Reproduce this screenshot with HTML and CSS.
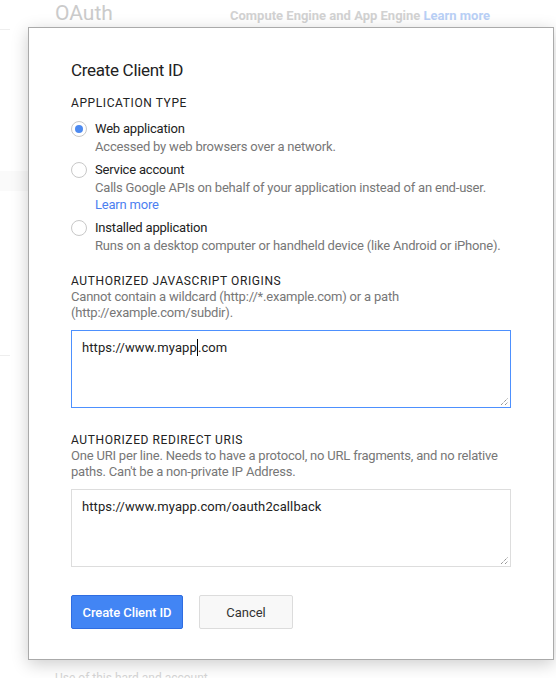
FILE: index.html
```html
<!DOCTYPE html>
<html>
<head>
<meta charset="utf-8">
<link rel="stylesheet" href="styles.css">
</head>
<body>
<div class="page">
  <div class="page-head">
    <span class="page-title">OAuth</span>
    <span class="page-note">Compute Engine and App Engine <span class="page-link">Learn more</span></span>
  </div>
  <div class="page-rule"></div>
  <div class="page-band"></div>
  <div class="page-rule low"></div>
  <div class="page-foot">Use of this hard and account</div>
</div>

<div class="dialog">
  <h1 class="dialog-title">Create Client ID</h1>

  <div class="section-label">APPLICATION TYPE</div>
  <div class="options">
    <div class="option">
      <span class="radio checked"></span>
      <div class="option-body">
        <div class="option-name">Web application</div>
        <div class="option-desc">Accessed by web browsers over a network.</div>
      </div>
    </div>
    <div class="option">
      <span class="radio"></span>
      <div class="option-body">
        <div class="option-name">Service account</div>
        <div class="option-desc">Calls Google APIs on behalf of your application instead of an end-user.<br><span class="link">Learn more</span></div>
      </div>
    </div>
    <div class="option">
      <span class="radio"></span>
      <div class="option-body">
        <div class="option-name">Installed application</div>
        <div class="option-desc">Runs on a desktop computer or handheld device (like Android or iPhone).</div>
      </div>
    </div>
  </div>

  <div class="section-label first-field">AUTHORIZED JAVASCRIPT ORIGINS</div>
  <div class="field-desc">Cannot contain a wildcard (http://*.example.com) or a path<br>(http://example.com/subdir).</div>
  <div class="field focused">https://www.myapp<span class="caret"></span>.com<svg class="grip" width="9" height="9" viewBox="0 0 9 9"><path d="M1 8 L8 1 M5 8 L8 5" stroke="#666" stroke-width="1" stroke-dasharray="1 1"/></svg></div>

  <div class="section-label second-field">AUTHORIZED REDIRECT URIS</div>
  <div class="field-desc">One URI per line. Needs to have a protocol, no URL fragments, and no relative<br>paths. Can't be a non-private IP Address.</div>
  <div class="field">https://www.myapp.com/oauth2callback<svg class="grip" width="9" height="9" viewBox="0 0 9 9"><path d="M1 8 L8 1 M5 8 L8 5" stroke="#666" stroke-width="1" stroke-dasharray="1 1"/></svg></div>

  <div class="actions">
    <button class="btn btn-primary">Create Client ID</button>
    <button class="btn btn-default">Cancel</button>
  </div>
</div>
</body>
</html>
```

FILE: styles.css
```css
html, body {
  margin: 0;
  padding: 0;
}
body {
  width: 556px;
  height: 678px;
  overflow: hidden;
  background: #fff;
  font-family: Roboto, "Liberation Sans", Arial, sans-serif;
  position: relative;
}

/* faded page behind the dialog */
.page {
  height: 678px;
  display: flex;
  flex-direction: column;
}
.page-head {
  display: flex;
  align-items: baseline;
  padding: 1px 0 0 55px;
  height: 26px;
}
.page-title {
  font-size: 21px;
  color: #cbcbcb;
  width: 175px;
}
.page-note {
  font-size: 13px;
  font-weight: 700;
  color: #d2d2d2;
}
.page-link {
  color: #b9d0f6;
}
.page-rule {
  width: 10px;
  height: 1px;
  background: #eee;
  margin-top: 2px;
}
.page-rule.low {
  margin-top: 164px;
}
.page-band {
  height: 20px;
  margin-top: 141px;
  width: 28px;
  background: #fafafa;
}
.page-foot {
  margin-top: auto;
  padding-left: 55px;
  font-size: 12px;
  color: #d6d6d6;
  height: 7px;
  line-height: 14px;
}

/* dialog */
.dialog {
  position: absolute;
  left: 28px;
  top: 27px;
  width: 526px;
  height: 633px;
  box-sizing: border-box;
  border: 1px solid #aaa;
  background: #fff;
  box-shadow: 0 4px 16px rgba(0, 0, 0, 0.2);
  padding: 30px 42px 0 42px;
  color: #222;
}
.dialog-title {
  margin: 0;
  font-size: 17px;
  font-weight: 400;
  line-height: 24px;
  letter-spacing: -0.3px;
  color: #222;
}
.section-label {
  font-size: 12px;
  line-height: 16px;
  letter-spacing: 0.6px;
  color: #222;
  margin-top: 13px;
}
.options {
  display: flex;
  flex-direction: column;
  gap: 6px;
  margin-top: 9px;
}
.option {
  display: flex;
  align-items: flex-start;
  gap: 8px;
}
.radio {
  flex: none;
  width: 16px;
  height: 16px;
  box-sizing: border-box;
  border: 1px solid #c8c8c8;
  border-radius: 50%;
  margin-top: 1px;
  display: flex;
  align-items: center;
  justify-content: center;
  background: #fff;
}
.radio.checked::after {
  content: "";
  width: 8px;
  height: 8px;
  border-radius: 50%;
  background: #4d8af0;
}
.option-name {
  font-size: 13px;
  line-height: 18px;
  letter-spacing: -0.2px;
  color: #222;
}
.option-desc {
  font-size: 13px;
  line-height: 17px;
  letter-spacing: -0.2px;
  color: #777;
  white-space: nowrap;
}
.link {
  color: #4d7ff0;
}
.first-field {
  margin-top: 19px;
}
.second-field {
  margin-top: 24px;
}
.field-desc {
  font-size: 13px;
  line-height: 16px;
  letter-spacing: -0.2px;
  color: #777;
  white-space: nowrap;
}
.field {
  position: relative;
  margin-top: 9px;
  height: 78px;
  box-sizing: border-box;
  border: 1px solid #ddd;
  padding: 8px 10px;
  font-size: 13px;
  line-height: 18px;
  letter-spacing: 0.1px;
  color: #222;
  background: #fff;
}
.field.focused {
  border-color: #4d90fe;
}
.caret {
  display: inline-block;
  width: 1px;
  height: 17px;
  background: #000;
  vertical-align: -4px;
}
.grip {
  position: absolute;
  right: 1px;
  bottom: 1px;
}
.actions {
  display: flex;
  gap: 16px;
  margin-top: 28px;
}
.btn {
  height: 34px;
  box-sizing: border-box;
  border-radius: 2px;
  font-family: Roboto, "Liberation Sans", Arial, sans-serif;
  font-size: 13px;
  padding: 0;
  white-space: nowrap;
}
.btn-primary {
  width: 112px;
  background: #4285f4;
  border: 1px solid #2f6de1;
  color: #fff;
  font-weight: 500;
  letter-spacing: -0.1px;
}
.btn-default {
  width: 94px;
  background: #f8f8f8;
  border: 1px solid #dcdcdc;
  color: #333;
}
```
